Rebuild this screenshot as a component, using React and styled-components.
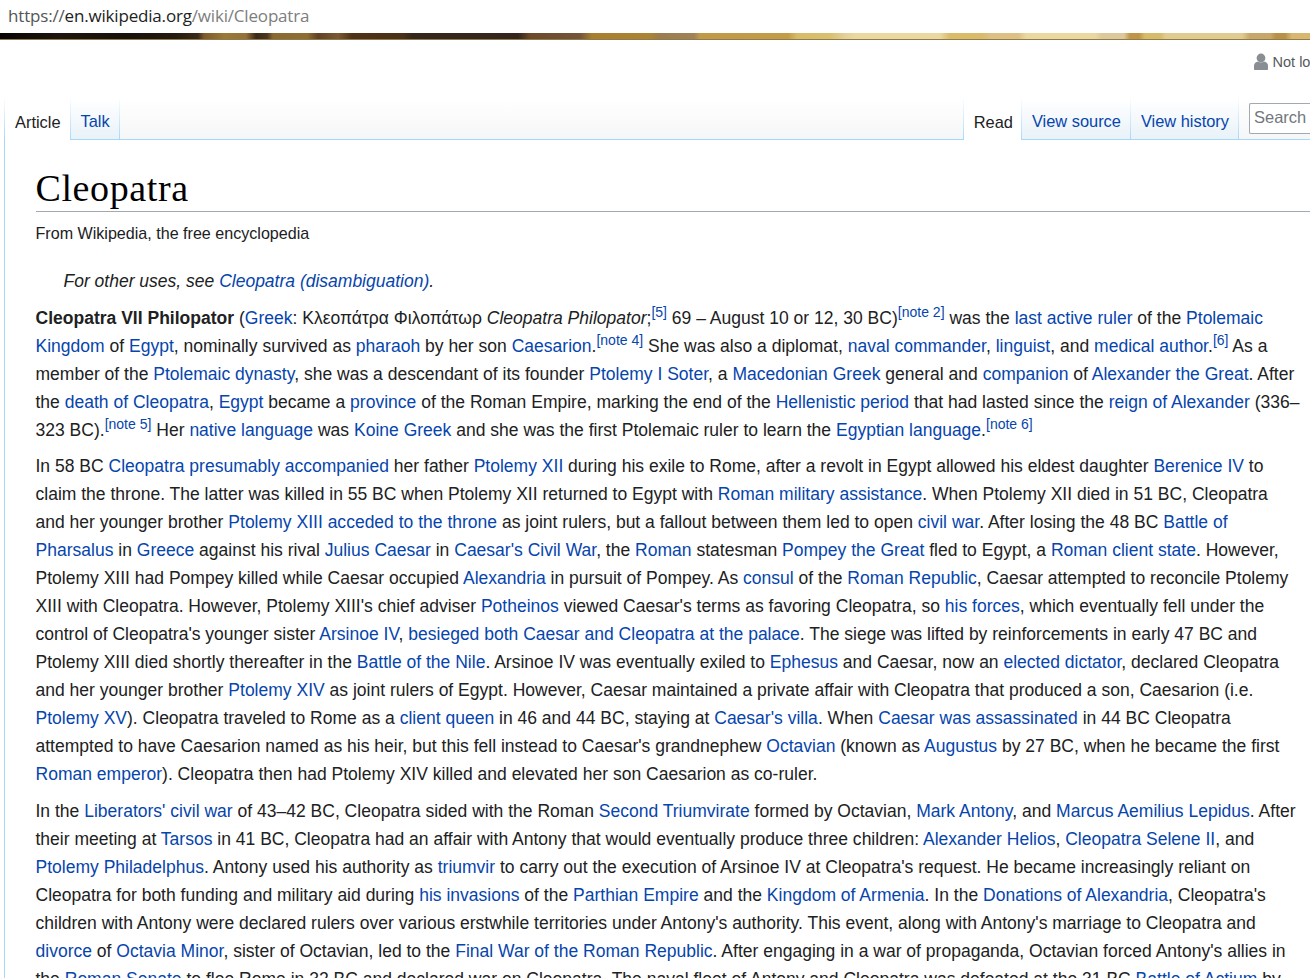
import React from 'react';
import styled, { createGlobalStyle } from 'styled-components';

const GlobalStyle = createGlobalStyle`
  html, body {
    margin: 0;
    padding: 0;
    height: 978px;
    overflow: hidden;
    background: #fff;
  }
`;

const Page = styled.div`
  width: 1310px;
  height: 978px;
  overflow: hidden;
  font-family: 'Liberation Sans', Arial, sans-serif;
  color: #202122;
`;

const UrlBar = styled.div`
  height: 33px;
  padding: 0 0 2px 8px;
  box-sizing: border-box;
  display: flex;
  align-items: center;
  font-family: 'Open Sans', 'Noto Sans', sans-serif;
  font-size: 17px;
  letter-spacing: -0.18px;
  color: #7d7d7d;
`;

const UrlHost = styled.span`
  color: #222;
`;

const UrlScheme = styled.span`
  color: #555;
`;

const Band = styled.div`
  height: 7px;
  background: linear-gradient(
    90deg,
    #050403 0,
    #0a0705 12px,
    #1e160e 60px,
    #17110b 125px,
    #241a10 175px,
    #3a2a1a 198px,
    #7d5a2c 204px,
    #9a7a38 225px,
    #93713a 246px,
    #3a2a1a 256px,
    #4a361f 267px,
    #8a6a30 273px,
    #8f6e33 307px,
    #5f4226 318px,
    #7a5a34 338px,
    #4e3218 352px,
    #4a3018 403px,
    #35261c 412px,
    #33251d 518px,
    #6b4a2a 530px,
    #74553a 580px,
    #a87f30 592px,
    #ab8434 650px,
    #9a7c50 660px,
    #a08458 694px,
    #c09a48 700px,
    #c29c48 788px,
    #d6bc68 797px,
    #d8c070 830px,
    #e4d098 845px,
    #ead8a0 855px,
    #ead8a0 940px,
    #d9bb6a 950px,
    #d9bb6a 982px,
    #dcc084 990px,
    #dcc084 1018px,
    #ead8a0 1026px,
    #ead8a0 1095px,
    #dcc89a 1102px,
    #dcc89a 1124px,
    #bf9648 1130px,
    #bf9648 1139px,
    #d6bc68 1145px,
    #d6bc68 1160px,
    #e0cc90 1166px,
    #e0cc90 1242px,
    #c8a86a 1250px,
    #c8a86a 1270px,
    #b89048 1276px,
    #b89048 1285px,
    #d8b870 1292px,
    #d8b870 1310px
  );
  border-bottom: 1px solid #8f7a4c;
  box-sizing: border-box;
`;

const UserRow = styled.div`
  height: 50px;
  padding-top: 13px;
  box-sizing: border-box;
  display: flex;
  justify-content: flex-end;
  align-items: flex-start;
  overflow: hidden;
`;

const UserLink = styled.a`
  display: flex;
  align-items: center;
  gap: 5px;
  margin-right: -48px;
  white-space: nowrap;
  font-size: 14.5px;
  color: #54595d;
`;

const Tabs = styled.div`
  height: 50px;
  margin-left: 4px;
  box-sizing: border-box;
  display: flex;
  justify-content: space-between;
  background: linear-gradient(#fff 0, #fff 20%, #f5f6f7 100%);
  border-bottom: 1px solid #a7d7f9;
`;

const TabGroup = styled.div`
  display: flex;
  align-items: stretch;
`;

const Tab = styled.a`
  display: flex;
  align-items: flex-end;
  padding: 0 9px 8px 10px;
  box-sizing: border-box;
  font-size: 16.4px;
  color: ${({ $active }) => ($active ? '#202122' : '#0645ad')};
  background: ${({ $active }) =>
    $active ? '#fff' : 'linear-gradient(#fff 0, #fff 20%, #e8f2f8 100%)'};
  border-style: solid;
  border-width: 0 1px 0 0;
  border-image: linear-gradient(#fff 0, #fff 15%, #a7d7f9 100%) 1;
  margin-bottom: ${({ $active }) => ($active ? '-1px' : '0')};
  height: ${({ $active }) => ($active ? '50px' : '49px')};
`;

const FirstTab = styled(Tab)`
  border-width: 0 1px 0 1px;
`;

const ReadTab = styled(Tab)`
  border-width: 0 1px 0 1px;
  padding: 0 8px 8px 9.5px;
`;

const SearchBox = styled.div`
  align-self: flex-start;
  margin: 13px 0 0 10px;
  width: 61px;
  height: 31px;
  box-sizing: border-box;
  border: 1px solid #a2a9b1;
  border-right: none;
  border-radius: 2px 0 0 2px;
  background: #fff;
  padding: 4px 0 0 4px;
  font-size: 16.5px;
  color: #72777d;
  white-space: nowrap;
  overflow: hidden;
`;

const Content = styled.div`
  margin-left: 4px;
  border-left: 1px solid #a7d7f9;
  padding: 27px 0 0 30.5px;
  height: 838px;
  box-sizing: border-box;
`;

const Title = styled.h1`
  margin: 0;
  height: 45px;
  font-family: 'Liberation Serif', 'Times New Roman', serif;
  font-size: 38px;
  letter-spacing: 0.6px;
  line-height: 43px;
  font-weight: 400;
  color: #000;
  border-bottom: 1px solid #a2a9b1;
  box-sizing: border-box;
`;

const SiteSub = styled.div`
  margin-top: 10px;
  height: 22px;
  font-size: 16.1px;
  line-height: 22px;
`;

const Hatnote = styled.div`
  margin: 23px 0 9px;
  padding-left: 28px;
  height: 28px;
  font-size: 17.5px;
  line-height: 28px;
  font-style: italic;
`;

const Para = styled.p`
  margin: ${({ $gap }) => $gap || 8}px 0 0;
  font-size: 17.5px;
  letter-spacing: 0.008px;
  line-height: 28px;
  white-space: nowrap;
`;

const A = styled.a`
  color: #0645ad;
`;

const Sup = styled.sup`
  font-size: 14px;
  line-height: 0;
  color: #0645ad;
`;

const PersonIcon = () => (
  <svg width="14" height="17" viewBox="0 0 14 17" fill="#8a8d91">
    <circle cx="7" cy="5" r="4.4" />
    <path d="M0 16v-3.5C0 10.4 2 9 4 8.6c.9.7 1.9 1 3 1s2.1-.3 3-1c2 .4 4 1.800 4 3.900V16c0 .6-.4 1-1 1H1c-.6 0-1-.4-1-1z" />
  </svg>
);

export default function App() {
  return (
    <Page>
      <GlobalStyle />
      <UrlBar>
        <span>
          <UrlScheme>https://</UrlScheme>
          <UrlHost>en.wikipedia.org</UrlHost>/wiki/Cleopatra
        </span>
      </UrlBar>
      <Band />
      <UserRow>
        <UserLink>
          <PersonIcon />
          Not logged in
        </UserLink>
      </UserRow>
      <Tabs>
        <TabGroup>
          <FirstTab $active>Article</FirstTab>
          <Tab>Talk</Tab>
        </TabGroup>
        <TabGroup>
          <ReadTab $active>Read</ReadTab>
          <Tab>View source</Tab>
          <Tab>View history</Tab>
          <SearchBox>Search Wikipedia</SearchBox>
        </TabGroup>
      </Tabs>
      <Content>
        <Title>Cleopatra</Title>
        <SiteSub>From Wikipedia, the free encyclopedia</SiteSub>
        <Hatnote>
          For other uses, see <A>Cleopatra (disambiguation)</A>.
        </Hatnote>
        <Para>
          <b>Cleopatra VII Philopator</b> (<A>Greek</A>: Κλεοπάτρα Φιλοπάτωρ <i>Cleopatra Philopator</i>;<Sup>[5]</Sup> 69 – August 10 or 12, 30 BC)<Sup>[note 2]</Sup> was the <A>last active ruler</A> of the <A>Ptolemaic</A>
          <br />
          <A>Kingdom</A> of <A>Egypt</A>, nominally survived as <A>pharaoh</A> by her son <A>Caesarion</A>.<Sup>[note 4]</Sup> She was also a diplomat, <A>naval commander</A>, <A>linguist</A>, and <A>medical author</A>.<Sup>[6]</Sup> As a
          <br />
          member of the <A>Ptolemaic dynasty</A>, she was a descendant of its founder <A>Ptolemy I Soter</A>, a <A>Macedonian Greek</A> general and <A>companion</A> of <A>Alexander the Great</A>. After
          <br />
          the <A>death of Cleopatra</A>, <A>Egypt</A> became a <A>province</A> of the Roman Empire, marking the end of the <A>Hellenistic period</A> that had lasted since the <A>reign of Alexander</A> (336–
          <br />
          323 BC).<Sup>[note 5]</Sup> Her <A>native language</A> was <A>Koine Greek</A> and she was the first Ptolemaic ruler to learn the <A>Egyptian language</A>.<Sup>[note 6]</Sup>
        </Para>
        <Para>
          In 58 BC <A>Cleopatra presumably accompanied</A> her father <A>Ptolemy XII</A> during his exile to Rome, after a revolt in Egypt allowed his eldest daughter <A>Berenice IV</A> to
          <br />
          claim the throne. The latter was killed in 55 BC when Ptolemy XII returned to Egypt with <A>Roman military assistance</A>. When Ptolemy XII died in 51 BC, Cleopatra
          <br />
          and her younger brother <A>Ptolemy XIII acceded to the throne</A> as joint rulers, but a fallout between them led to open <A>civil war</A>. After losing the 48 BC <A>Battle of</A>
          <br />
          <A>Pharsalus</A> in <A>Greece</A> against his rival <A>Julius Caesar</A> in <A>Caesar's Civil War</A>, the <A>Roman</A> statesman <A>Pompey the Great</A> fled to Egypt, a <A>Roman client state</A>. However,
          <br />
          Ptolemy XIII had Pompey killed while Caesar occupied <A>Alexandria</A> in pursuit of Pompey. As <A>consul</A> of the <A>Roman Republic</A>, Caesar attempted to reconcile Ptolemy
          <br />
          XIII with Cleopatra. However, Ptolemy XIII's chief adviser <A>Potheinos</A> viewed Caesar's terms as favoring Cleopatra, so <A>his forces</A>, which eventually fell under the
          <br />
          control of Cleopatra's younger sister <A>Arsinoe IV</A>, <A>besieged both Caesar and Cleopatra at the palace</A>. The siege was lifted by reinforcements in early 47 BC and
          <br />
          Ptolemy XIII died shortly thereafter in the <A>Battle of the Nile</A>. Arsinoe IV was eventually exiled to <A>Ephesus</A> and Caesar, now an <A>elected dictator</A>, declared Cleopatra
          <br />
          and her younger brother <A>Ptolemy XIV</A> as joint rulers of Egypt. However, Caesar maintained a private affair with Cleopatra that produced a son, Caesarion (i.e.
          <br />
          <A>Ptolemy XV</A>). Cleopatra traveled to Rome as a <A>client queen</A> in 46 and 44 BC, staying at <A>Caesar's villa</A>. When <A>Caesar was assassinated</A> in 44 BC Cleopatra
          <br />
          attempted to have Caesarion named as his heir, but this fell instead to Caesar's grandnephew <A>Octavian</A> (known as <A>Augustus</A> by 27 BC, when he became the first
          <br />
          <A>Roman emperor</A>). Cleopatra then had Ptolemy XIV killed and elevated her son Caesarion as co-ruler.
        </Para>
        <Para $gap={9}>
          In the <A>Liberators' civil war</A> of 43–42 BC, Cleopatra sided with the Roman <A>Second Triumvirate</A> formed by Octavian, <A>Mark Antony</A>, and <A>Marcus Aemilius Lepidus</A>. After
          <br />
          their meeting at <A>Tarsos</A> in 41 BC, Cleopatra had an affair with Antony that would eventually produce three children: <A>Alexander Helios</A>, <A>Cleopatra Selene II</A>, and
          <br />
          <A>Ptolemy Philadelphus</A>. Antony used his authority as <A>triumvir</A> to carry out the execution of Arsinoe IV at Cleopatra's request. He became increasingly reliant on
          <br />
          Cleopatra for both funding and military aid during <A>his invasions</A> of the <A>Parthian Empire</A> and the <A>Kingdom of Armenia</A>. In the <A>Donations of Alexandria</A>, Cleopatra's
          <br />
          children with Antony were declared rulers over various erstwhile territories under Antony's authority. This event, along with Antony's marriage to Cleopatra and
          <br />
          <A>divorce</A> of <A>Octavia Minor</A>, sister of Octavian, led to the <A>Final War of the Roman Republic</A>. After engaging in a war of propaganda, Octavian forced Antony's allies in
          <br />
          the <A>Roman Senate</A> to flee Rome in 32 BC and declared war on Cleopatra. The naval fleet of Antony and Cleopatra was defeated at the 31 BC <A>Battle of Actium</A> by
        </Para>
      </Content>
    </Page>
  );
}
